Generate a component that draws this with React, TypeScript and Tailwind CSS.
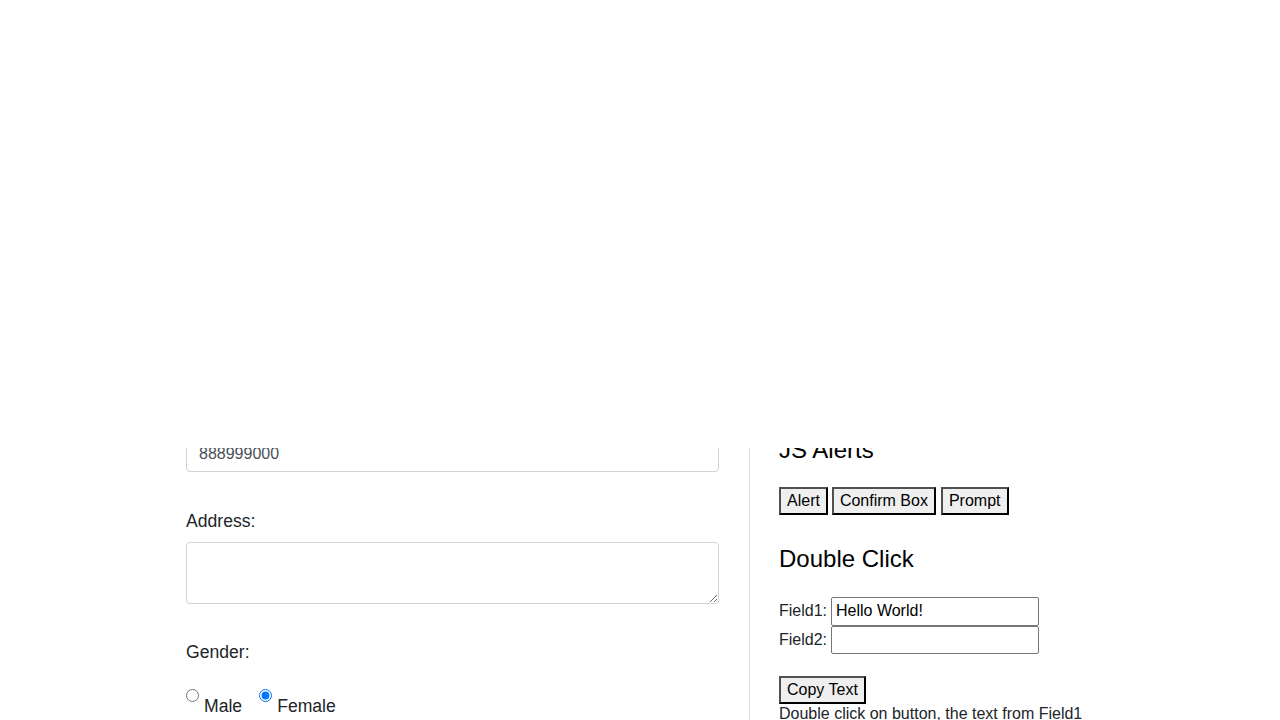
import React from "react";

const sans = "font-['Liberation_Sans',Arial,Helvetica,sans-serif]";

function LegacyButton({ children }: { children: React.ReactNode }) {
  return (
    <button
      type="button"
      className="h-[28px] border-2 border-t-[#505050] border-l-[#505050] border-b-black border-r-black bg-[#efefef] px-[6px] text-[16px] leading-[18px] text-black"
    >
      {children}
    </button>
  );
}

export default function App() {
  return (
    <div className={`h-[720px] w-[1280px] overflow-hidden bg-white ${sans}`}>
      {/* blank area above the scrolled form */}
      <div className="h-[448px]" />

      <div className="h-[272px] overflow-hidden">
        <div className="-mt-[14px] flex">
          {/* Left column: contact form */}
          <div className="ml-[186px] w-[533px] shrink-0 text-[#212529]">
            <input
              type="text"
              defaultValue="888999000"
              className="block h-[38px] w-full rounded-[4px] border border-[#ced4da] px-[12px] pt-[2px] text-[16px] text-[#495057] outline-none"
            />

            <div className="mt-[36px]">
              <label className="block text-[17.6px] leading-[26.4px]">Address:</label>
              <textarea className="mt-[8px] block h-[62px] w-full rounded-[4px] border border-[#ced4da] px-[12px] py-[6px] text-[16px] outline-none" />
            </div>

            <div className="mt-[35px]">
              <label className="block text-[17.6px] leading-[26.4px]">Gender:</label>
              <div className="mt-[21px] flex items-start">
                <input type="radio" name="gender" className="mt-[2px] h-[13px] w-[13px]" />
                <span className="ml-[5px] mt-[6px] text-[17.6px] leading-[26.4px]">Male</span>
                <input type="radio" name="gender" defaultChecked className="ml-[17px] mt-[2px] h-[13px] w-[13px] accent-[#0075ff]" />
                <span className="ml-[5px] mt-[6px] text-[17.6px] leading-[26.4px]">Female</span>
              </div>
            </div>
          </div>

          {/* Right column: widgets */}
          <div className="ml-[30px] shrink-0 border-l border-[#dee2e6] pl-[29px] text-black">
            <div className="w-[330px]">
              <h2 className="mt-[1px] text-[24px] leading-[29px] font-normal">JS Alerts</h2>
              <div className="mt-[23px] flex gap-[4px]">
                <LegacyButton>Alert</LegacyButton>
                <LegacyButton>Confirm Box</LegacyButton>
                <div className="ml-[1px]">
                  <LegacyButton>Prompt</LegacyButton>
                </div>
              </div>

              <h2 className="mt-[29px] text-[24px] leading-[29px] font-normal">Double Click</h2>
              <div className="mt-[24px] text-[16px] text-[#212529]">
                <div className="flex h-[29px] items-center">
                  <span className="w-[52px] pb-[1px]">Field1:</span>
                  <input
                    type="text"
                    defaultValue="Hello World!"
                    className="h-[29px] w-[208px] rounded-[2px] border border-[#767676] px-[4px] pb-[1px] text-[16px] text-black outline-none"
                  />
                </div>
                <div className="flex h-[28px] items-center">
                  <span className="w-[52px]">Field2:</span>
                  <input
                    type="text"
                    className="h-[28px] w-[208px] rounded-[2px] border border-[#767676] px-[4px] text-[16px] text-black outline-none"
                  />
                </div>
              </div>

              <div className="mt-[22px]">
                <LegacyButton>Copy Text</LegacyButton>
              </div>
              <p className="mt-[1px] text-[16px] leading-[18px] text-[#212529]">
                Double click on button, the text from Field1 should be copied into Field2.
              </p>
            </div>
          </div>
        </div>
      </div>
    </div>
  );
}
